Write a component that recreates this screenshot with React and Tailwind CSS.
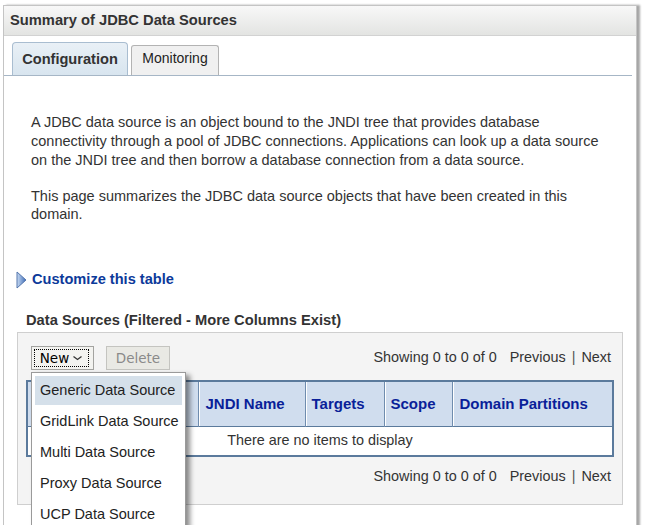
import React from 'react'

const menuItems = ['Generic Data Source', 'GridLink Data Source', 'Multi Data Source', 'Proxy Data Source', 'UCP Data Source']

function Pager() {
  return (
    <div className="flex items-center justify-end h-[24px] pr-[3px] text-[14.4px] text-[#333]">
      <span>Showing 0 to 0 of 0</span>
      <span className="ml-[13px]">Previous</span>
      <span className="mx-[6px] text-[#555]">|</span>
      <span>Next</span>
    </div>
  )
}

function Triangle() {
  return (
    <svg width="11" height="18" viewBox="0 0 11 18">
      <defs>
        <linearGradient id="tri" x1="0" y1="0" x2="1" y2="0">
          <stop offset="0" stopColor="#c9dbf2" />
          <stop offset="1" stopColor="#3d6cb8" />
        </linearGradient>
      </defs>
      <polygon points="1,1 10,9 1,17" fill="url(#tri)" stroke="#5476ad" strokeWidth="1" strokeLinejoin="round" />
    </svg>
  )
}

export default function App() {
  return (
    <div className="font-['Liberation_Sans',Arial,sans-serif] bg-white w-[645px] h-[525px] overflow-hidden">
      <div className="ml-[3px] mt-[5px] w-[634px] border border-[#c4c4c4] bg-white shadow-[3px_0_2px_rgba(0,0,0,0.35)] pb-[40px]">
        {/* header */}
        <div className="h-[30px] flex items-center pl-[6px] bg-linear-to-b from-[#f8f8f8] to-[#e3e4e2] border-b border-[#d2d2d2] text-[14.7px] font-bold text-[#333]">
          Summary of JDBC Data Sources
        </div>

        {/* tabs */}
        <div className="flex items-end gap-[3px] pl-[8px] mr-[4px] pt-[6px] border-b border-[#a6b6c6]">
          <div className="w-[116px] h-[33px] pt-[7px] text-center leading-[18px] text-[14.6px] font-bold text-[#333] border border-b-0 border-[#a9bdd0] rounded-t-[4px] bg-linear-to-b from-[#e9f0f6] to-[#d8e5ef]">
            Configuration
          </div>
          <div className="w-[88px] h-[30px] pt-[3px] text-center leading-[18px] text-[14px] text-[#222] border border-b-0 border-[#b3b3b3] rounded-t-[3px] bg-[#f0f0f0]">
            Monitoring
          </div>
        </div>

        {/* description */}
        <div className="pl-[27px] mt-[37px] w-[603px] text-[14.5px] leading-[19px] text-[#333]">
          <p>
            A JDBC data source is an object bound to the JNDI tree that provides database connectivity through a pool of JDBC connections. Applications can look up a data source on the JNDI tree and then borrow a database connection from a data source.
          </p>
          <p className="mt-[17px] leading-[18px]">
            This page summarizes the JDBC data source objects that have been created in this domain.
          </p>
        </div>

        {/* customize */}
        <div className="flex items-center gap-[5px] pl-[12px] mt-[47px] h-[19px]">
          <Triangle />
          <span className="text-[14.6px] font-bold text-[#0c3a9a]">Customize this table</span>
        </div>

        <div className="pl-[22px] mt-[22px] h-[19px] leading-[19px] text-[14.7px] font-bold text-[#333]">
          Data Sources (Filtered - More Columns Exist)
        </div>

        {/* table box */}
        <div className="ml-[13px] mt-[2px] w-[606px] border border-[#cfcfcf] bg-[#f4f4f4] px-[8px] pt-[13px] pb-[15px]">
          <div className="flex items-center justify-between">
            <div className="flex items-center gap-[12px] pl-[5px]">
              <div className="relative">
                <button className="w-[63px] h-[24px] border border-[#a3a3a0] bg-[#f3f3f0] pl-[2px] pr-[4px] py-[2px] font-['DejaVu_Sans',sans-serif] text-[13.5px] text-black">
                  <span className="flex items-center justify-center gap-[3px] h-full border border-dotted border-black">
                    New
                    <svg width="11" height="6" viewBox="0 0 11 6">
                      <polyline points="1.5,1.5 5.5,4.5 9.5,1.5" fill="none" stroke="#333" strokeWidth="1.3" />
                    </svg>
                  </span>
                </button>
                <div className="absolute left-0 top-[26px] z-10 w-[155px] bg-white border border-[#9a9a9a] shadow-[4px_3px_5px_rgba(0,0,0,0.45)] pt-[3px] px-[3px] pb-[3px]">
                  {menuItems.map((item, i) => (
                    <div
                      key={item}
                      className={`h-[29px] mb-[2px] flex items-center pl-[5px] text-[14.5px] text-[#222] ${i === 0 ? 'bg-[#d5e0ea]' : ''}`}
                    >
                      {item}
                    </div>
                  ))}
                </div>
              </div>
              <button className="w-[64px] h-[24px] border border-[#c4c4c0] bg-[#e9e9e4] font-['DejaVu_Sans',sans-serif] text-[13.5px] text-[#8a8a8a]">
                Delete
              </button>
            </div>
            <div className="flex-1">
              <Pager />
            </div>
          </div>

          <table className="mt-[10px] w-full border-collapse border-2 border-[#5b7a9c] text-[14.4px]">
            <thead>
              <tr className="h-[45px] bg-[#d0ddee] text-left font-bold text-[15px] text-[#0a1f99]">
                <th className="w-[24px] border-r border-[#8aa2be]"></th>
                <th className="w-[147px] border-r border-[#6f8cae]"></th>
                <th className="w-[107px] border-r border-[#6f8cae] pl-[7px] shadow-[inset_1px_0_0_#fff]">JNDI Name</th>
                <th className="w-[79px] border-r border-[#6f8cae] pl-[6px] shadow-[inset_1px_0_0_#fff]">Targets</th>
                <th className="w-[68px] border-r border-[#6f8cae] pl-[6px] shadow-[inset_1px_0_0_#fff]">Scope</th>
                <th className="pl-[7px] shadow-[inset_1px_0_0_#fff]">Domain Partitions</th>
              </tr>
            </thead>
            <tbody>
              <tr className="h-[30px] bg-white border-t border-[#5b7a9c]">
                <td colSpan={6} className="text-center text-[#333]">There are no items to display</td>
              </tr>
            </tbody>
          </table>

          <div className="mt-[8px]">
            <Pager />
          </div>
        </div>
      </div>
    </div>
  )
}
